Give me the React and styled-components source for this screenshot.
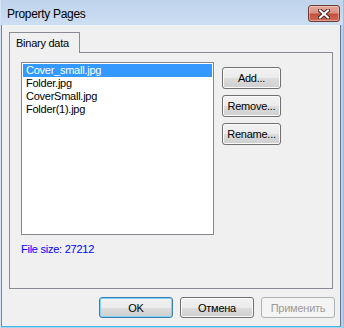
import React from "react";
import styled, { createGlobalStyle } from "styled-components";

const GlobalStyle = createGlobalStyle`
  html, body {
    margin: 0;
    padding: 0;
    background: #f0f0f0;
  }
  * {
    box-sizing: border-box;
  }
`;

const files = ["Cover_small.jpg", "Folder.jpg", "CoverSmall.jpg", "Folder(1).jpg"];

export default function App() {
  return (
    <>
      <GlobalStyle />
      <Window>
        <TitleBar>
          <Title>Property Pages</Title>
          <CloseButton aria-label="Close">
            <svg width="12" height="10" viewBox="0 0 12 10">
              <path d="M2 1.5 L10 8.5 M10 1.5 L2 8.5" stroke="#4a2424" strokeWidth="4" strokeLinecap="square" />
              <path d="M2 1.5 L10 8.5 M10 1.5 L2 8.5" stroke="#ffffff" strokeWidth="2" strokeLinecap="square" />
            </svg>
          </CloseButton>
        </TitleBar>
        <Client>
          <Tabs>
            <Tab>Binary data</Tab>
          </Tabs>
          <Panel>
            <Row>
              <ListBox>
                {files.map((f, i) => (
                  <ListItem key={f} selected={i === 0}>
                    {f}
                  </ListItem>
                ))}
              </ListBox>
              <SideButtons>
                <Button width={59} height={22}>Add...</Button>
                <Button width={59} height={22}>Remove...</Button>
                <Button width={59} height={22}>Rename...</Button>
              </SideButtons>
            </Row>
            <FileSize>File size: 27212</FileSize>
          </Panel>
          <Footer>
            <Button width={74} height={21} isDefault>OK</Button>
            <Button width={74} height={21}>Отмена</Button>
            <Button width={74} height={21} disabled>Применить</Button>
          </Footer>
        </Client>
      </Window>
    </>
  );
}

const Window = styled.div`
  width: 344px;
  height: 328px;
  display: flex;
  flex-direction: column;
  background: #b9d1ec;
  border-left: 1px solid #d4e4f5;
  border-right: 1px solid #9dbde2;
  border-bottom: 1px solid #a6d6ee;
  font-family: "Liberation Sans", Arial, sans-serif;
  font-size: 11px;
  letter-spacing: -0.25px;
  color: #000;
`;

const TitleBar = styled.div`
  height: 25px;
  flex: none;
  display: flex;
  align-items: flex-start;
  justify-content: space-between;
  background: linear-gradient(#bfd4ec, #c6d9ef 60%, #cddff2);
`;

const Title = styled.div`
  padding: 7px 0 0 6px;
  font-size: 12px;
  line-height: 15px;
  letter-spacing: -0.3px;
  color: #000;
`;

const CloseButton = styled.div`
  width: 32px;
  height: 17px;
  margin: 5px 3px 0 0;
  display: flex;
  align-items: center;
  justify-content: center;
  border: 1px solid #6d3a3a;
  border-radius: 3px;
  background: linear-gradient(#e6aa9d 0%, #d9907f 45%, #c4503c 55%, #cf6a55 100%);
  box-shadow: inset 0 0 0 1px rgba(255, 220, 210, 0.45);
`;

const Client = styled.div`
  flex: 1;
  display: flex;
  flex-direction: column;
  margin-right: 2px;
  background: #f0f0f0;
  border-left: 1px solid #4a93d8;
  border-right: 1px solid #627791;
  border-bottom: 1px solid #43b3e1;
`;

const Tabs = styled.div`
  display: flex;
  height: 20px;
  margin: 7px 7px 0;
`;

const Tab = styled.div`
  position: relative;
  z-index: 1;
  width: 71px;
  height: 21px;
  padding: 0 6px;
  border: 1px solid #898c95;
  border-bottom: none;
  background: #f0f0f0;
  line-height: 20px;
  white-space: nowrap;
`;

const Panel = styled.div`
  height: 237px;
  margin: 0 7px;
  padding: 9px 11px 0;
  border: 1px solid #898c95;
`;

const Row = styled.div`
  display: flex;
  align-items: flex-start;
`;

const ListBox = styled.div`
  width: 193px;
  height: 173px;
  padding: 1px;
  border: 1px solid #828790;
  background: #fff;
`;

const ListItem = styled.div`
  height: 13px;
  line-height: 13px;
  padding-left: 3px;
  white-space: nowrap;
  background: ${(p) => (p.selected ? "#3399ff" : "transparent")};
  color: ${(p) => (p.selected ? "#fff" : "#000")};
`;

const SideButtons = styled.div`
  display: flex;
  flex-direction: column;
  gap: 6px;
  margin: 5px 0 0 8px;
`;

const Button = styled.button`
  width: ${(p) => p.width}px;
  height: ${(p) => p.height}px;
  padding: 0;
  font-family: "Liberation Sans", Arial, sans-serif;
  font-size: 11px;
  letter-spacing: -0.25px;
  color: #000;
  border: 1px solid ${(p) => (p.isDefault ? "#3c7fb1" : "#707070")};
  border-radius: 3px;
  background: linear-gradient(#f2f2f2 0%, #ebebeb 50%, #dddddd 50%, #cfcfcf 100%);
  box-shadow: inset 0 0 0 1px ${(p) => (p.isDefault ? "#7fd3f4" : "#fbfbfb")};

  &:disabled {
    color: #9c9c9c;
    border-color: #adb2b5;
    background: #f4f4f4;
    box-shadow: none;
  }
`;

const FileSize = styled.div`
  margin-top: 8px;
  line-height: 13px;
  color: #0000ff;
`;

const Footer = styled.div`
  display: flex;
  justify-content: flex-end;
  gap: 7px;
  margin-top: 8px;
  padding-right: 5px;
`;
